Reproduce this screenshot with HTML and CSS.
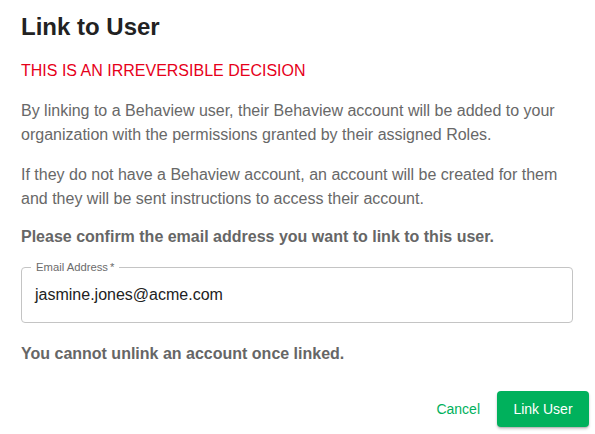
FILE: index.html
```html
<!DOCTYPE html>
<html lang="en">
<head>
<meta charset="utf-8">
<title>Link to User</title>
<link rel="stylesheet" href="styles.css">
</head>
<body>
<div class="dialog">
  <h1 class="title">Link to User</h1>
  <p class="warning">THIS IS AN IRREVERSIBLE DECISION</p>
  <p class="text">By linking to a Behaview user, their Behaview account will be added to your organization with the permissions granted by their assigned Roles.</p>
  <p class="text">If they do not have a Behaview account, an account will be created for them and they will be sent instructions to access their account.</p>
  <p class="strong confirm">Please confirm the email address you want to link to this user.</p>
  <div class="field">
    <span class="field-label">Email Address<span class="req">*</span></span>
    <div class="field-value">jasmine.jones@acme.com</div>
  </div>
  <p class="strong note">You cannot unlink an account once linked.</p>
  <div class="actions">
    <button class="btn btn-text">Cancel</button>
    <button class="btn btn-primary">Link User</button>
  </div>
</div>
</body>
</html>
```
FILE: styles.css
```css
* { box-sizing: border-box; }
html, body { margin: 0; padding: 0; background: #fff; }
body {
  font-family: "Liberation Sans", Arial, Helvetica, sans-serif;
  color: #222;
  width: 595px;
  height: 434px;
  overflow: hidden;
}
.dialog {
  padding: 11px 22px 0 21px;
}
.title {
  margin: 0;
  font-size: 24px;
  line-height: 32px;
  font-weight: 700;
  color: #222;
}
.warning {
  margin: 16px 0 0;
  font-size: 16px;
  line-height: 24px;
  color: #e6001a;
}
.text {
  margin: 16px 0 0;
  font-size: 16px;
  line-height: 24px;
  color: #686868;
}
.strong {
  font-size: 16px;
  line-height: 24px;
  font-weight: 700;
  color: #666;
}
.confirm { margin: 14px 0 0; }
.field {
  position: relative;
  margin-top: 18px;
  height: 56px;
  border: 1px solid #c4c4c4;
  border-radius: 4px;
  display: flex;
  align-items: center;
  padding: 0 13px;
}
.field-label {
  position: absolute;
  left: 9px;
  top: -8px;
  padding: 0 5px;
  background: #fff;
  font-size: 11.25px;
  line-height: 14px;
  color: #6b6b6b;
}
.req { margin-left: 2px; }
.field-value {
  font-size: 16px;
  line-height: 24px;
  color: #222;
}
.note { margin: 19px 0 0; }
.actions {
  display: flex;
  justify-content: flex-end;
  align-items: center;
  gap: 9px;
  margin-top: 25px;
  margin-right: -16px;
}
.btn {
  font-family: "Liberation Sans", Arial, Helvetica, sans-serif;
  font-size: 14px;
  height: 36px;
  border: 0;
  border-radius: 4px;
  cursor: pointer;
}
.btn-text {
  background: transparent;
  color: #00b15c;
  padding: 0 8px;
}
.btn-primary {
  background: #00b15c;
  color: #fff;
  padding: 0 16px;
  width: 92px;
  box-shadow: 0 2px 3px rgba(0,0,0,0.2), 0 1px 1px rgba(0,0,0,0.12);
}
```
